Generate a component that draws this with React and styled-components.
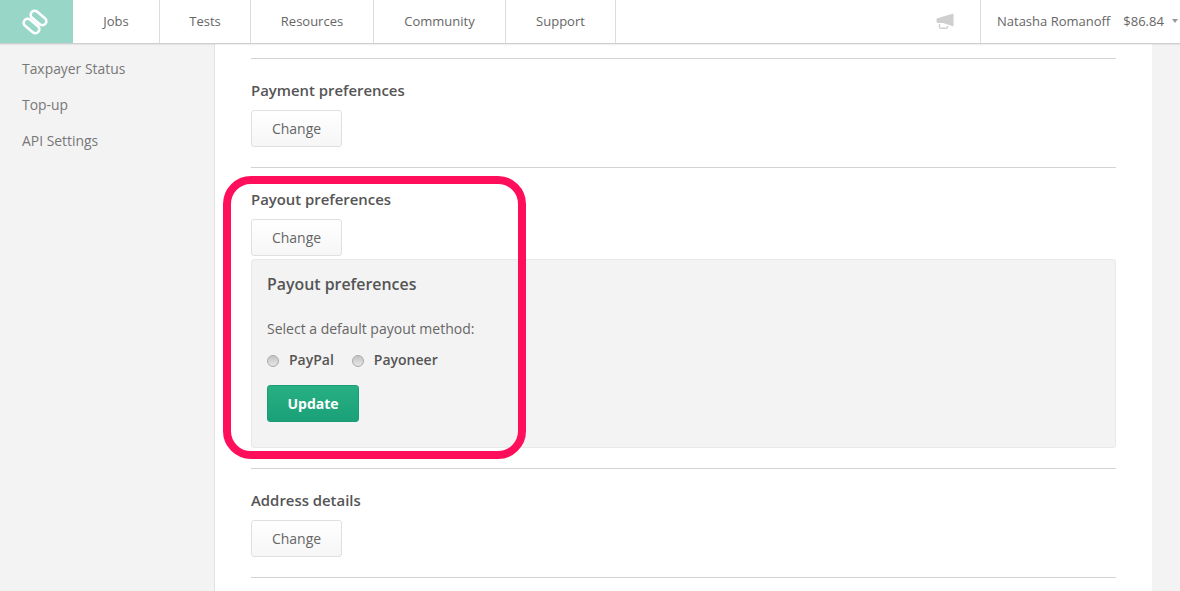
import React from 'react';
import styled, { createGlobalStyle } from 'styled-components';

const Global = createGlobalStyle`
  html, body { margin: 0; padding: 0; height: 100%; overflow: hidden; background: #f3f3f3; }
  body { font-family: "Open Sans", "Liberation Sans", sans-serif; font-size: 14px; color: #555; }
  * { box-sizing: border-box; }
`;
const Page = styled.div`position: relative; width: 1180px; height: 591px; overflow: hidden; background: #f3f3f3;`;
const Header = styled.header`
  display: flex; height: 44px; background: #fff; border-bottom: 1px solid #cfcfcf;
  box-shadow: 0 1px 1px rgba(0,0,0,.06); position: relative; z-index: 1;
`;
const Logo = styled.div`
  width: 73px; background: #98d7c8; display: flex; align-items: center; justify-content: center; padding-right: 3px;
`;
const Nav = styled.nav`display: flex;`;
const NavItem = styled.a`
  display: flex; align-items: center; justify-content: center; width: ${p => p.$w}px; padding-bottom: 2px;
  border-right: 1px solid #dcdcdc; font-size: 13px; color: #666;
`;
const Right = styled.div`margin-left: auto; display: flex; align-items: center;`;
const Mega = styled.div`width: 44px; display: flex; justify-content: flex-start; padding-bottom: 1px;`;
const User = styled.div`
  display: flex; align-items: center; height: 43px; width: 200px; padding: 0 0 2px 16px;
  border-left: 1px solid #dcdcdc; font-size: 13px; color: #666;
`;
const Balance = styled.span`margin-left: 13px;`;
const Caret = styled.span`
  margin: 1px 0 0 8px; width: 0; height: 0; border-left: 3.5px solid transparent; border-right: 3.5px solid transparent;
  border-top: 4px solid #999;
`;
const Body = styled.div`display: flex; height: 547px;`;
const Sidebar = styled.aside`
  width: 215px; border-right: 1px solid #e2e2e2; padding: 7px 0 0 22px; display: flex; flex-direction: column;
`;
const SideLink = styled.a`height: 36px; line-height: 36px; font-size: 13.9px; color: #777;`;
const Main = styled.main`width: 937px; background: #fff; padding: 14px 36px 0;`;
const Section = styled.section`border-top: 1px solid #d2d2d2; padding: 21px 0 20px;`;
const Title = styled.h3`margin: 0 0 10px; font-size: 14.9px; line-height: 20px; font-weight: 600; color: #555;`;
const Button = styled.button`
  display: block; width: 91px; height: 37px; padding: 0; font: 400 14px "Open Sans", sans-serif; color: #666;
  background: linear-gradient(#fff, #f6f6f6); border: 1px solid #e0e0e0; border-radius: 3px;
`;
const Well = styled.div`
  margin-top: 3px; height: 189px; background: #f3f3f3; border: 1px solid #e8e8e8; border-radius: 3px; padding: 11px 15px 0;
`;
const WellTitle = styled.h4`margin: 0; font-size: 15.9px; line-height: 26px; font-weight: 600; color: #555;`;
const Hint = styled.p`margin: 22px 0 0; font-size: 14px; line-height: 20px; color: #666;`;
const Options = styled.div`display: flex; align-items: center; margin-top: 10px; height: 20px;`;
const Radio = styled.span`
  width: 12px; height: 12px; border-radius: 50%; border: 1px solid #aaa; margin: 4px 10px 0 0;
  background: linear-gradient(#c4c4c4, #e6e6e6); flex: none;
`;
const OptionLabel = styled.label`font-size: 14px; font-weight: 600; color: #555; margin-right: 18px;`;
const Update = styled.button`
  display: block; margin-top: 16px; width: 92px; height: 37px; padding: 0; font: 700 14px "Open Sans", sans-serif; color: #fff;
  background: linear-gradient(#27b083, #1ba077); border: 1px solid #1d9b74; border-radius: 3px;
`;
const Highlight = styled.div`
  position: absolute; left: 223px; top: 176px; width: 303px; height: 283px;
  border: 8px solid #ff0f5b; border-radius: 28px; pointer-events: none; z-index: 2;
`;

const navs = [['Jobs', 87], ['Tests', 91], ['Resources', 123], ['Community', 132], ['Support', 110]];

export default function App() {
  return (
    <Page>
      <Global />
      <Header>
        <Logo>
          <svg width="28" height="28" viewBox="0 0 28 28" fill="none" stroke="#fff" strokeWidth="2.6" strokeLinecap="round">
            <rect x="8.5" y="6" width="18" height="8" rx="4" transform="rotate(40 17.5 10)" />
            <rect x="1.5" y="14" width="18" height="8" rx="4" transform="rotate(40 10.5 18)" />
          </svg>
        </Logo>
        <Nav>
          {navs.map(([n, w]) => <NavItem key={n} $w={w}>{n}</NavItem>)}
        </Nav>
        <Right>
          <Mega>
            <svg width="18" height="16" viewBox="0 0 18 16" fill="#cfcfcf">
              <path d="M17.5 0.5V13.5L7 10H2Q0.5 10 0.5 8.5V6.5Q0.5 5 2 5Z" />
              <path d="M3.5 11V14Q3.5 15.2 5 15.2H10Q11.5 15.2 11.5 14V13" fill="none" stroke="#cfcfcf" strokeWidth="1.4" />
            </svg>
          </Mega>
          <User>Natasha Romanoff<Balance>$86.84</Balance><Caret /></User>
        </Right>
      </Header>
      <Body>
        <Sidebar>
          <SideLink>Taxpayer Status</SideLink>
          <SideLink>Top-up</SideLink>
          <SideLink>API Settings</SideLink>
        </Sidebar>
        <Main>
          <Section>
            <Title>Payment preferences</Title>
            <Button>Change</Button>
          </Section>
          <Section>
            <Title>Payout preferences</Title>
            <Button>Change</Button>
            <Well>
              <WellTitle>Payout preferences</WellTitle>
              <Hint>Select a default payout method:</Hint>
              <Options>
                <Radio /><OptionLabel>PayPal</OptionLabel>
                <Radio /><OptionLabel>Payoneer</OptionLabel>
              </Options>
              <Update>Update</Update>
            </Well>
          </Section>
          <Section>
            <Title>Address details</Title>
            <Button>Change</Button>
          </Section>
          <Section />
        </Main>
      </Body>
      <Highlight />
    </Page>
  );
}
